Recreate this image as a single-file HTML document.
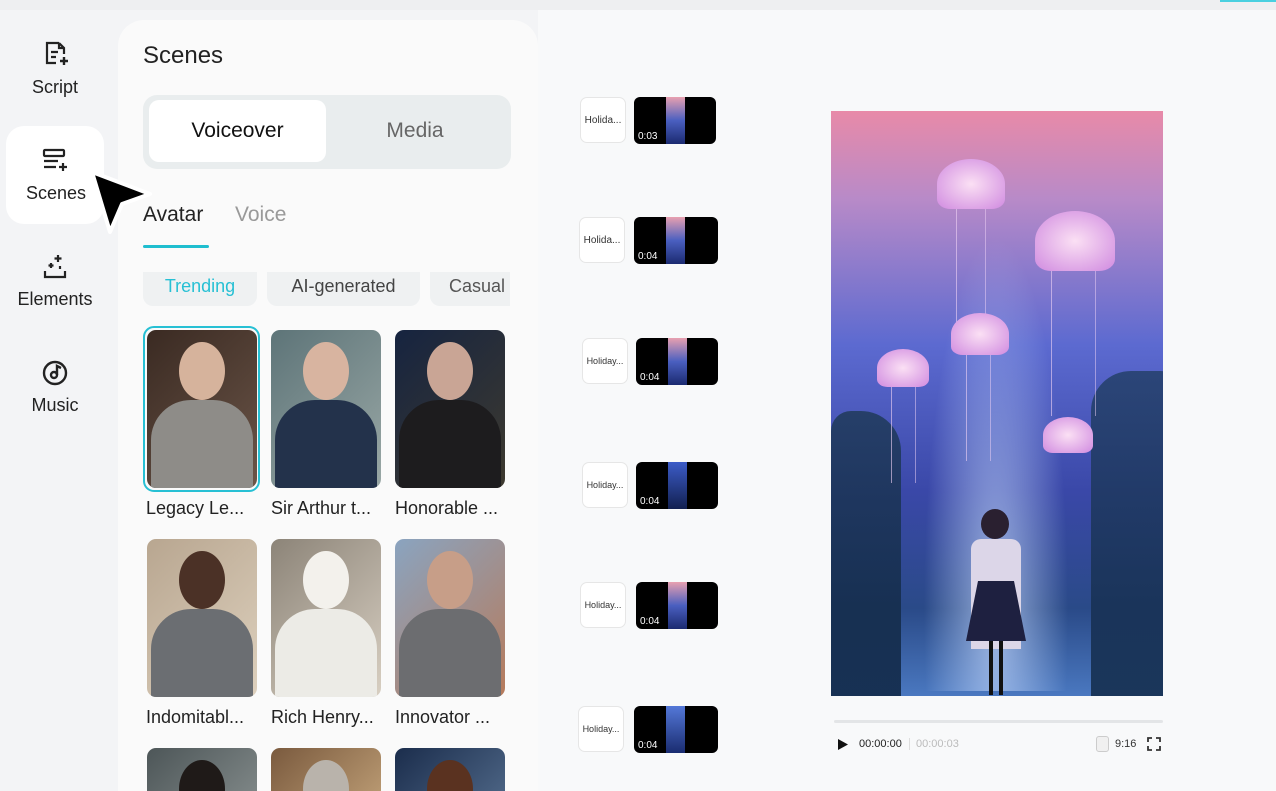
<!DOCTYPE html>
<html style="overflow:hidden;width:1276px;height:791px"><head><meta charset="utf-8"><style>
*{margin:0;padding:0;box-sizing:border-box}
body{width:1276px;height:791px;overflow:hidden;background:#f3f4f6;font-family:"Liberation Sans",sans-serif;position:relative;color:#1a1a1a}
.abs{position:absolute}
.nav{position:absolute;left:0;width:110px;text-align:center;font-size:18px;color:#222}
.panel{position:absolute;left:118px;top:20px;width:420px;height:771px;background:#fafafa;border-radius:26px 26px 0 0}
.right{position:absolute;left:538px;top:10px;width:738px;height:781px;background:#f8f9fa}
.av{position:absolute;width:110px;height:158px;border-radius:9px;overflow:hidden}
.av .h{position:absolute;left:32px;top:12px;width:46px;height:58px;border-radius:50%}
.av .b{position:absolute;left:4px;top:70px;width:102px;height:100px;border-radius:40px 40px 0 0}
.name{position:absolute;font-size:18px;color:#222}
.lab{position:absolute;width:46px;height:46px;background:#fff;border:1px solid #e6e6e6;border-radius:7px;font-size:10px;color:#333;display:flex;align-items:center;justify-content:center}
.vid{position:absolute;width:82px;height:47px;background:#000;border-radius:6px;overflow:hidden}
.vid .s{position:absolute;left:32px;top:0;width:19px;height:47px;background:linear-gradient(#e8a0b0,#4a5fc0 50%,#1b2a70)}
.vid span{position:absolute;left:4px;bottom:2px;color:#fff;font-size:10px}
.jf{position:absolute;border-radius:50% 50% 20% 20%;background:radial-gradient(#fbe0f4,#d08ae0)}
.tn{position:absolute;border-left:1px solid rgba(240,210,245,.6)}
</style></head><body>
<div class="abs" style="left:0;top:0;width:1276px;height:10px;background:#eeeff1"></div>
<svg class="abs" style="left:42px;top:40px" width="28" height="28" viewBox="0 0 28 28" fill="none" stroke="#222" stroke-width="2.2"><path d="M17 3H5v20h9M17 3l5 5v6M17 3v5h5M9 12h7M9 17h5"/><path d="M22 17v8M18 21h8" stroke-width="2.4"/></svg>
<div class="nav" style="top:77px">Script</div>
<div class="abs" style="left:6px;top:126px;width:98px;height:98px;background:#fff;border-radius:18px"></div>
<svg class="abs" style="left:42px;top:147px" width="28" height="28" viewBox="0 0 28 28" fill="none" stroke="#222" stroke-width="2.2"><rect x="2" y="3" width="20" height="6" rx="1"/><path d="M2 14h14M2 20h12"/><path d="M21 16v8M17 20h8"/></svg>
<div class="nav" style="top:183px;left:1px">Scenes</div>
<svg class="abs" style="left:42px;top:253px" width="28" height="28" viewBox="0 0 28 28" fill="none" stroke="#222" stroke-width="2.2"><path d="M3 18v6h20v-6"/><path d="M16 2v7M12.5 5.5h7M9 10v5M6.5 12.5h5M18 13v3"/></svg>
<div class="nav" style="top:289px">Elements</div>
<svg class="abs" style="left:41px;top:359px" width="28" height="28" viewBox="0 0 28 28" fill="none" stroke="#222" stroke-width="2.4"><circle cx="14" cy="14" r="11"/><circle cx="13" cy="16" r="3"/><path d="M16 16V7l4 2"/></svg>
<div class="nav" style="top:395px">Music</div>
<div class="panel"></div>
<div class="abs" style="left:143px;top:42px;font-size:24px;color:#222">Scenes</div>
<div class="abs" style="left:143px;top:95px;width:368px;height:74px;background:#e9edee;border-radius:14px"></div>
<div class="abs" style="left:149px;top:100px;width:177px;height:62px;background:#fff;border-radius:10px;font-size:21px;text-align:center;line-height:62px;color:#111">Voiceover</div>
<div class="abs" style="left:330px;top:100px;width:170px;height:62px;font-size:21px;text-align:center;line-height:62px;color:#666">Media</div>
<div class="abs" style="left:143px;top:203px;font-size:21px;color:#222">Avatar</div>
<div class="abs" style="left:235px;top:203px;font-size:21px;color:#999">Voice</div>
<div class="abs" style="left:143px;top:245px;width:66px;height:3px;background:#1fbecf;border-radius:2px"></div>
<div class="abs" style="left:143px;top:272px;width:114px;height:34px;background:#eff1f2;border-radius:0 0 10px 10px;font-size:18px;color:#27c0d4;text-align:center;line-height:28px">Trending</div>
<div class="abs" style="left:267px;top:272px;width:153px;height:34px;background:#eff1f2;border-radius:0 0 10px 10px;font-size:18px;color:#444;text-align:center;line-height:28px">AI-generated</div>
<div class="abs" style="left:430px;top:272px;width:80px;height:34px;background:#eff1f2;border-radius:0 0 0 10px;font-size:18px;color:#555;line-height:28px;padding-left:19px;overflow:hidden;white-space:nowrap">Casual</div>
<div class="abs" style="left:143px;top:326px;width:117px;height:166px;border:2.5px solid #27c0d4;border-radius:11px"></div>
<div class="av" style="left:147px;top:330px;background:linear-gradient(135deg,#3a2a22,#6b5548)"><div class="h" style="background:#d6b39c"></div><div class="b" style="background:#8e8c88"></div></div>
<div class="av" style="left:271px;top:330px;background:linear-gradient(135deg,#5d7478,#9aa8a6)"><div class="h" style="background:#d8b4a0"></div><div class="b" style="background:#23324b"></div></div>
<div class="av" style="left:395px;top:330px;background:linear-gradient(135deg,#162440,#3e3a2f)"><div class="h" style="background:#c9a595"></div><div class="b" style="background:#1d1c1e"></div></div>
<div class="name" style="left:146px;top:498px">Legacy Le...</div>
<div class="name" style="left:271px;top:498px">Sir Arthur t...</div>
<div class="name" style="left:395px;top:498px">Honorable ...</div>
<div class="av" style="left:147px;top:539px;background:linear-gradient(135deg,#b8a690,#ddd0bd)"><div class="h" style="background:#4b3126"></div><div class="b" style="background:#6b6e72"></div></div>
<div class="av" style="left:271px;top:539px;background:linear-gradient(135deg,#8c8478,#d8cfc2)"><div class="h" style="background:#f3f1ec"></div><div class="b" style="background:#ecebe6"></div></div>
<div class="av" style="left:395px;top:539px;background:linear-gradient(135deg,#8aa4c0,#b77a5a)"><div class="h" style="background:#c79e88"></div><div class="b" style="background:#6c6d70"></div></div>
<div class="name" style="left:146px;top:707px">Indomitabl...</div>
<div class="name" style="left:271px;top:707px">Rich Henry...</div>
<div class="name" style="left:395px;top:707px">Innovator ...</div>
<div class="av" style="left:147px;top:748px;height:43px;border-radius:9px 9px 0 0;background:linear-gradient(135deg,#4d5658,#7d8585)"><div class="h" style="background:#1f1a18"></div></div>
<div class="av" style="left:271px;top:748px;height:43px;border-radius:9px 9px 0 0;background:linear-gradient(135deg,#7a5a3e,#b79770)"><div class="h" style="background:#b9b3ab"></div></div>
<div class="av" style="left:395px;top:748px;height:43px;border-radius:9px 9px 0 0;background:linear-gradient(135deg,#1b2d4c,#4a6282)"><div class="h" style="background:#5a3220"></div></div>
<svg class="abs" style="left:82px;top:164px" width="76" height="76" viewBox="0 0 76 76"><path d="M10 8L68 30 40 40 28 68Z" fill="#000" stroke="#fff" stroke-width="4" stroke-linejoin="round"/></svg>
<div class="right"></div>
<div class="abs" style="left:1220px;top:0;width:56px;height:2px;background:#4ad0e0"></div>
<div class="lab" style="left:580px;top:97px">Holida...</div><div class="vid" style="left:634px;top:97px"><div class="s"></div><span>0:03</span></div>
<div class="lab" style="left:579px;top:217px">Holida...</div><div class="vid" style="left:634px;top:217px;width:84px"><div class="s"></div><span>0:04</span></div>
<div class="lab" style="left:582px;top:338px;font-size:9px">Holiday...</div><div class="vid" style="left:636px;top:338px"><div class="s"></div><span>0:04</span></div>
<div class="lab" style="left:582px;top:462px;font-size:9px">Holiday...</div><div class="vid" style="left:636px;top:462px"><div class="s" style="background:linear-gradient(#3c5cc8,#122050)"></div><span>0:04</span></div>
<div class="lab" style="left:580px;top:582px;font-size:9px">Holiday...</div><div class="vid" style="left:636px;top:582px"><div class="s"></div><span>0:04</span></div>
<div class="lab" style="left:578px;top:706px;font-size:9px">Holiday...</div><div class="vid" style="left:634px;top:706px;width:84px"><div class="s" style="background:linear-gradient(#5478d8,#1a2c70)"></div><span>0:04</span></div>
<div class="abs" style="left:831px;top:111px;width:332px;height:585px;overflow:hidden;background:linear-gradient(180deg,#e88aa8 0%,#b88ac8 15%,#5c6ad0 40%,#3a48a8 65%,#2a4a88 85%,#4a78c0 100%)">
<div class="abs" style="left:0;top:300px;width:70px;height:290px;background:linear-gradient(#1f3a5a,#0e2440);border-radius:20px 40px 0 0;opacity:.85"></div>
<div class="abs" style="left:260px;top:260px;width:80px;height:330px;background:linear-gradient(#24406a,#122a48);border-radius:40px 10px 0 0;opacity:.85"></div>
<div class="abs" style="left:80px;top:60px;width:170px;height:520px;background:radial-gradient(ellipse at 50% 85%,rgba(200,220,255,.7),transparent 60%)"></div>
<div class="tn" style="left:125px;top:95px;height:120px;border-right:1px solid rgba(240,210,245,.5);width:30px"></div>
<div class="tn" style="left:220px;top:155px;height:150px;border-right:1px solid rgba(240,210,245,.5);width:45px"></div>
<div class="tn" style="left:135px;top:240px;height:110px;width:25px;border-right:1px solid rgba(240,210,245,.5)"></div>
<div class="tn" style="left:60px;top:272px;height:100px;width:25px;border-right:1px solid rgba(240,210,245,.5)"></div>
<div class="jf" style="left:106px;top:48px;width:68px;height:50px"></div>
<div class="jf" style="left:204px;top:100px;width:80px;height:60px"></div>
<div class="jf" style="left:120px;top:202px;width:58px;height:42px"></div>
<div class="jf" style="left:46px;top:238px;width:52px;height:38px"></div>
<div class="jf" style="left:212px;top:306px;width:50px;height:36px"></div>
<div class="abs" style="left:150px;top:398px;width:28px;height:30px;border-radius:50%;background:#2a2030"></div>
<div class="abs" style="left:140px;top:428px;width:50px;height:110px;background:#dcd6e8;border-radius:10px 10px 0 0"></div>
<div class="abs" style="left:135px;top:470px;width:60px;height:60px;background:#1e2040;clip-path:polygon(20% 0,80% 0,100% 100%,0 100%)"></div>
<div class="abs" style="left:158px;top:530px;width:14px;height:54px;border-left:4px solid #111;border-right:4px solid #111"></div>
</div>
<div class="abs" style="left:834px;top:720px;width:329px;height:3px;background:#e3e5e7;border-radius:2px"></div>
<svg class="abs" style="left:837px;top:738px" width="12" height="13"><path d="M1 1L11 6.5 1 12Z" fill="#111"/></svg>
<div class="abs" style="left:859px;top:738px;font-size:11px;color:#222">00:00:00</div>
<div class="abs" style="left:909px;top:738px;width:1px;height:12px;background:#ddd"></div>
<div class="abs" style="left:916px;top:738px;font-size:11px;color:#bbb">00:00:03</div>
<div class="abs" style="left:1096px;top:736px;width:13px;height:16px;border:1px solid #ccc;border-radius:3px;background:#f0f0f0"></div>
<div class="abs" style="left:1115px;top:738px;font-size:11px;color:#333">9:16</div>
<svg class="abs" style="left:1147px;top:737px" width="14" height="14" fill="none" stroke="#333" stroke-width="1.8"><path d="M1 5V1h4M9 1h4v4M13 9v4H9M5 13H1V9"/></svg>
</body></html>
